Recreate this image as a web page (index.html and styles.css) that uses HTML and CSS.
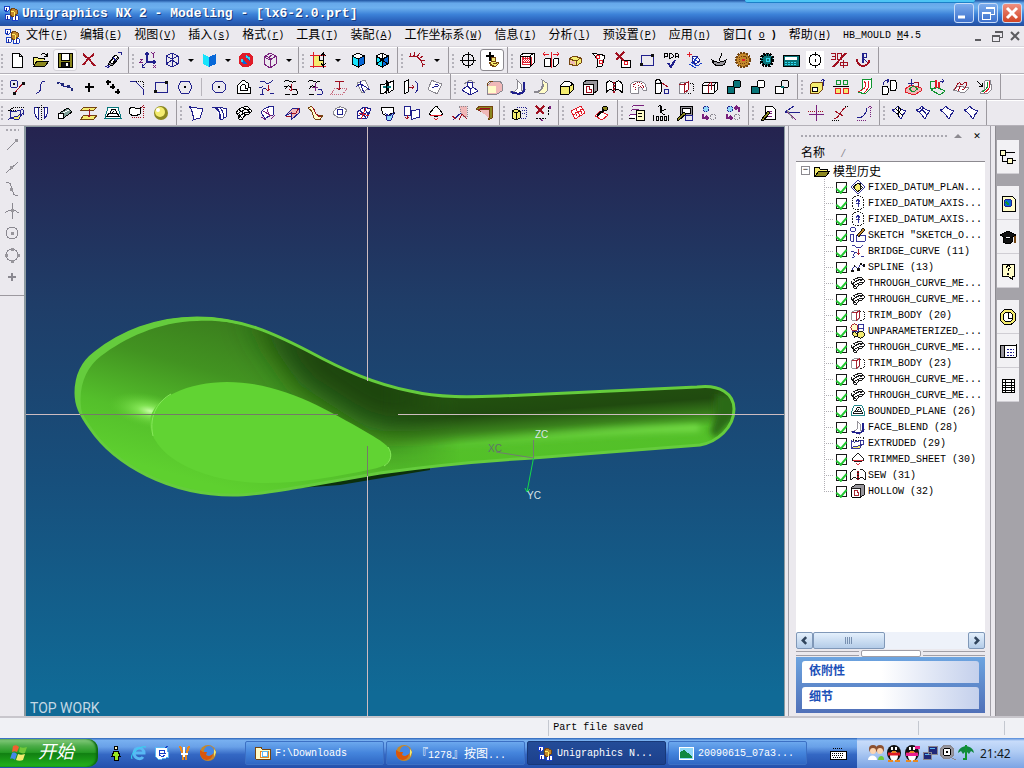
FILE: index.html
```html
<!DOCTYPE html>
<html lang="zh-CN">
<head>
    <meta charset="UTF-8">
    <meta name="viewport" content="width=device-width, initial-scale=1.0">
    <title>Unigraphics NX 2 - Modeling - [lx6-2.0.prt]</title>
    <link rel="stylesheet" href="styles.css">
</head>
<body>
    <!-- ICON SHEET -->
    <svg class="sheet" aria-hidden="true">
        <symbol id="app" viewBox="0 0 18 18"><path class="s-blue f-white" d="M2 2h5v4l-2 2-3-2zM10 12l3-2 3 2v4l-3 1-3-1zM3 11l2-1 3 1v4l-2 1-3-1z"/><path class="s-brown f-orange" d="M8 6l3-2 4 2v4l-4 3-3-2z"/><path class="s-yellow" d="M9 7l3 1v4"/><path class="s-navy" d="M4 4v3M5 12v4M13 12v4"/></symbol>
        <symbol id="new" viewBox="0 0 18 18"><path class="f-white" d="M4 2h7l3 3v11H4zM11 2v3h3"/></symbol>
        <symbol id="open" viewBox="0 0 18 18"><path class="f-yellow" d="M1 14V6h4l1 1h6v2"/><path class="f-olive" d="M2 15l3-5h12l-4 5z"/><path d="M9 4c2-2 5-2 6 1M15 2v3h-3"/></symbol>
        <symbol id="save" viewBox="0 0 18 18"><path class="f-olive" d="M2 2h14v14H2z"/><path class="f-white" d="M5 2h8v7H5z"/><path class="f-black" d="M5 11h8v5H5z"/><path class="f-white plain" d="M10 12h2v3h-2z"/></symbol>
        <symbol id="del" viewBox="0 0 18 18"><path class="s-dred w2" d="M3 3c4 3 8 7 12 12M14 3C10 6 6 10 3 14"/></symbol>
        <symbol id="pen" viewBox="0 0 18 18"><path class="f-gray" d="M4 13l7-9 4 3-7 8z"/><path class="f-white" d="M6 11l6-7 2 2-6 7z"/><path class="s-navy" d="M1 16l4-2M3 17l3-2M14 1h3v3M9 6l3 4"/></symbol>
        <symbol id="csys" viewBox="0 0 18 18"><path class="s-navy w2" d="M8 2v9h8"/><path class="s-navy" d="M8 11l-5 5M6 4l2-3 2 3M14 9l3 2-3 2M3 13v3h3"/><path class="s-purple" d="M12 1l2 2 2-2M14 3v4M1 8h3l-3 3h3M14 14l3 3M17 14l-3 3"/></symbol>
        <symbol id="cube" viewBox="0 0 18 18"><path class="s-navy" d="M3 5l6-3 6 3v8l-6 3-6-3zM3 5l6 3 6-3M9 2v6M9 8v8M3 13l6-4 6 4"/></symbol>
        <symbol id="cyan" viewBox="0 0 18 18"><path class="plain f-cyan" d="M3 3l6 3v10l-6-3z"/><path class="plain f-blue" d="M9 6l7-3v10l-7 3z"/></symbol>
        <symbol id="stop" viewBox="0 0 18 18"><circle class="s-red f-blue w3" cx="9" cy="9" r="6"/><path class="s-cyan w2" d="M9 5l4 3M5 8v3"/><path class="s-red w3" d="M5 5l8 8"/></symbol>
        <symbol id="pcube" viewBox="0 0 18 18"><path class="s-purple" d="M3 6l6-4 6 3v8l-6 4-6-4zM3 6l6 3 6-4M9 9v8M5 5l5 3M12 3L6 8"/></symbol>
        <symbol id="layer" viewBox="0 0 18 18"><path class="f-yellow" d="M4 4h6v5h4v6H4z"/><path class="s-red" d="M1 4h16M1 15h16M4 1v16"/><path d="M14 1v16M12 5l2-3 3 3M12 12l2 3 3-3"/></symbol>
        <symbol id="scube" viewBox="0 0 18 18"><path class="f-cyan" d="M3 5l6 3v8l-6-3z"/><path class="f-blue" d="M9 8l6-3v8l-6 3z"/><path class="f-white" d="M3 5l6-3 6 3-6 3z"/></symbol>
        <symbol id="scube2" viewBox="0 0 18 18"><use href="#scube"/><path d="M3 5l12 8M3 13l12-8M9 2v14"/></symbol>
        <symbol id="comb" viewBox="0 0 18 18"><path class="s-dred" d="M1 6c6-3 13 1 14 10M3 5L2 2M6 5l1-4M9 6l3-4M11 8l4-3M13 10l4-1M14 13l3 1"/></symbol>
        <symbol id="target" viewBox="0 0 18 18"><circle cx="9" cy="9" r="6"/><path d="M9 1v16M1 9h16"/></symbol>
        <symbol id="snap" viewBox="0 0 18 18"><path class="w2" d="M7 1v9M3 5h8"/><path class="s-brown f-yellow" d="M8 6h4v4H8zM6 12l4-2 6 2-4 4z"/><path class="s-brown" d="M7 14l5 2M10 12l4 1"/></symbol>
        <symbol id="redbox" viewBox="0 0 18 18"><path class="f-white" d="M2 5l4-3h10v10l-4 4H2z"/><path class="plain f-red" d="M4 6h10v8H4z"/><path d="M2 5h10v11M12 5l4-3"/><path class="s-white dots" d="M6 6v8M8 6v8M10 6v8M5 9h8M5 12h8"/></symbol>
        <symbol id="stretch" viewBox="0 0 18 18"><path class="s-red" d="M1 3h6M11 3h6M3 1L1 3l2 2M15 1l2 2-2 2M9 1v16"/><path class="f-white" d="M2 9l2-2h4v8H2zM11 9l2-2h3v6l-2 2h-3z"/></symbol>
        <symbol id="brick" viewBox="0 0 18 18"><path class="s-brown f-yellow" d="M3 8l5-3 7 2v5l-5 3-7-2z"/><path class="f-pink plain" d="M4 9l5 2v3l-5-2z"/><path class="s-brown" d="M3 8l7 2 5-3M10 10v5"/></symbol>
        <symbol id="sheet1" viewBox="0 0 18 18"><path class="f-white" d="M2 2c5 2 8 0 13 3l-3 10-5 1c2-6-1-11-5-14z"/><circle class="s-red" cx="8" cy="6" r="2"/><circle class="s-red" cx="11" cy="11" r="2"/></symbol>
        <symbol id="delface" viewBox="0 0 18 18"><path class="f-white" d="M7 9h9v7H7z"/><path class="s-dred w2" d="M2 2l8 8M10 1L2 9"/><circle class="s-red" cx="12" cy="12" r="2"/></symbol>
        <symbol id="rect" viewBox="0 0 18 18"><path class="s-navy" d="M3 4h12v10H3z"/><path class="plain f-black" d="M2 12h3v3H2zM13 3h3v3h-3z"/></symbol>
        <symbol id="pda" viewBox="0 0 18 18"><path d="M2 7V2h3v3H2M7 7V2h2l2 2v2l-2 1H7M13 7V3l1-1 2 1v4M13 5h3"/><path class="s-navy w2" d="M6 12l3 4 4-7"/></symbol>
        <symbol id="bluestar" viewBox="0 0 18 18"><path class="s-red" d="M3 1v5M1 3h5"/><path class="s-navy f-white" d="M6 6l5-1 3 5-4 3-4-3z"/><path class="s-blue" d="M7 7l5 4M11 6l-3 5M5 11l6 4 5-3M3 13l7 4"/></symbol>
        <symbol id="dish" viewBox="0 0 18 18"><path class="f-gray" d="M2 9c3 3 9 3 14 0-1 8-12 8-14 0z"/><path d="M9 10l3-8"/></symbol>
        <symbol id="gear" viewBox="0 0 18 18"><circle class="s-brown f-orange dash w2" cx="9" cy="9" r="7"/><circle class="s-brown dots" cx="9" cy="9" r="4"/><path class="s-red w2" d="M8 9h3"/></symbol>
        <symbol id="tgear" viewBox="0 0 18 18"><circle class="f-teal dash w3" cx="9" cy="9" r="6"/><circle class="s-cyan" cx="10" cy="9" r="2"/></symbol>
        <symbol id="calc" viewBox="0 0 18 18"><path class="f-teal" d="M1 4h16v11H1z"/><path class="f-white plain" d="M3 6h12v3H3z"/><path class="s-cyan dash" d="M3 11h12M3 13h12"/></symbol>
        <symbol id="clk" viewBox="0 0 18 18"><path class="plain f-white" d="M0 0h18v18H0z"/><circle cx="9" cy="9" r="6"/><path d="M9 1v4M9 8v3M9 14v3"/></symbol>
        <symbol id="percent" viewBox="0 0 18 18"><path class="s-dred" d="M1 2h4v6H1M2 5h3M7 2h4v6H7zM10 11h7M10 11v3h7v-3M13 9v8"/><path class="s-dred w2" d="M16 2L3 16"/></symbol>
        <symbol id="anchor" viewBox="0 0 18 18"><path class="s-dred w2" d="M3 8c0 9 12 9 12 1"/><path class="s-navy" d="M8 12V2h4v4H8l5 5M9 12V3"/></symbol>

        <symbol id="circline" viewBox="0 0 18 18"><circle class="s-navy" cx="6" cy="6" r="4"/><path class="s-dred" d="M6 16L15 5"/><path class="plain f-black" d="M5 5h2v2H5zM14 4h3v3h-3zM5 14h3v3H5z"/></symbol>
        <symbol id="scurve" viewBox="0 0 18 18"><path class="s-navy" d="M4 15c8 1 1-12 9-12"/></symbol>
        <symbol id="spline" viewBox="0 0 18 18"><path class="s-navy" d="M1 6c3-2 4-1 6 2s6-2 10 4"/><path class="plain f-navy" d="M5 5h3v3H5zM11 7h3v3h-3zM1 4h2v2H1zM15 10h2v3h-2z"/></symbol>
        <symbol id="plus" viewBox="0 0 18 18"><path class="w2" d="M9 5v9M5 9h9"/></symbol>
        <symbol id="points" viewBox="0 0 18 18"><path class="w2" d="M4 2v5M2 4h5M9 6v5M6 9h5M14 11v5M11 14h5"/></symbol>
        <symbol id="fillet" viewBox="0 0 18 18"><path class="s-navy" d="M2 3h5l8 8v6"/><path class="dots" d="M8 3h7v7"/></symbol>
        <symbol id="hex" viewBox="0 0 18 18"><path class="s-navy" d="M5 3h8l3 6-3 6H5L2 9z"/><path class="w2" d="M8 9h2"/></symbol>
        <symbol id="ellipse" viewBox="0 0 18 18"><ellipse class="s-navy" cx="9" cy="9" rx="7" ry="6"/><path class="w2" d="M8 9h2"/></symbol>
        <symbol id="offset" viewBox="0 0 18 18"><path class="f-white" d="M3 15V8l6-6 5 3v4h2v6zM6 12V9l3-3 2 1v3h2v2z"/></symbol>
        <symbol id="bridge" viewBox="0 0 18 18"><path class="s-navy" d="M2 3h4c2 4 6 3 9-1M2 16h3c-2-4 0-6 3-5M12 15h4M1 9c3 2 3-1 4 0"/><path class="s-dred" d="M10 7v6M8 11l2 2 2-2"/></symbol>
        <symbol id="bridge2" viewBox="0 0 18 18"><path d="M2 4c5-5 5 3 12-1M3 11c3-5 6-3 5-1M3 16h5M10 16h5c1-4-2-6-4-4M2 8h4"/><path class="s-dred" d="M9 6v7M7 11l2 2 2-2"/></symbol>
        <symbol id="bridge3" viewBox="0 0 18 18"><path d="M2 4c5-5 5 3 12-1M3 11c3-5 6-3 5-1M3 16h5"/><path class="s-navy" d="M11 16h5c1-4-2-6-4-4"/><path class="s-purple" d="M9 5v8M6 9h6"/></symbol>
        <symbol id="project" viewBox="0 0 18 18"><path class="s-pink dots" d="M1 16l4-6h12l-4 6z"/><path class="s-dred" d="M9 4v8M7 10l2 2 2-2M5 3h9"/></symbol>
        <symbol id="isect" viewBox="0 0 18 18"><path class="s-gray f-white" d="M3 5l8-3 4 8-7 5z"/><path class="s-navy" d="M2 9c5-6 9 0 14 3M6 3c2 5 1 9 5 12"/></symbol>
        <symbol id="section" viewBox="0 0 18 18"><path class="f-white" d="M2 6h5l2-2v9l-3 2H2zM10 5l5-2v9l-5 3z"/><path class="s-teal w2" d="M5 9h8"/><path d="M8 2v14"/></symbol>
        <symbol id="wrap" viewBox="0 0 18 18"><path class="f-white" d="M2 4l4-2v12l-4 2z"/><path class="s-dred" d="M7 9h5M10 7l2 2-2 2"/><path class="s-navy" d="M13 3c4 3 4 9 0 12"/></symbol>
        <symbol id="sheet2" viewBox="0 0 18 18"><path class="s-gray f-white" d="M6 2c3 3 6 2 10 4l-5 10c-4-3-6-2-9-5z"/><path class="s-navy" d="M6 10c3-3 4 1 7-3M9 6l3 1"/></symbol>
        <symbol id="pyramid" viewBox="0 0 18 18"><path class="s-gray" d="M3 6l6-4 5 3"/><path class="s-navy f-white" d="M1 12l5-4V4l5 0 1 5 5 4-8 4z"/><path class="s-navy" d="M6 8l4 3 2-2M10 11l-1 6"/></symbol>
        <symbol id="cubey" viewBox="0 0 18 18"><path class="s-gray f-pink" d="M2 8l5-5h8l2 3v7l-5 3H2z"/><path class="plain f-cream" d="M3 8h8v7H3z"/><path class="s-brown" d="M2 8c1-5 3-5 6-5"/></symbol>
        <symbol id="blend" viewBox="0 0 18 18"><path class="s-gray f-white" d="M8 2l4 4v7l5-2-6 6-10-3c6 0 9-2 7-12z"/><path class="s-navy w2" d="M15 4v9c-3 4-8 3-13 1"/></symbol>
        <symbol id="blend2" viewBox="0 0 18 18"><path class="s-gray f-cream" d="M9 2l5 3 1 7-4 4-10-2c6 0 9-3 8-12z"/><path class="s-gray" d="M10 6c1 5-3 8-7 8"/></symbol>
        <symbol id="chamfer" viewBox="0 0 18 18"><path class="f-yellow" d="M3 8l5-5h4l4 3v6l-4 4H3z"/><path class="f-white" d="M3 8l5-5h4l4 3-4 3z"/><path d="M12 9v7"/></symbol>
        <symbol id="hollow" viewBox="0 0 18 18"><path class="f-gray" d="M2 5l4-3h10v11l-4 3H2z"/><path class="f-white" d="M2 6h10v10H2z"/><path class="s-dred" d="M5 8v6h5v-3H8V8z"/></symbol>
        <symbol id="sew" viewBox="0 0 18 18"><path class="f-white" d="M1 15V6c2-4 5-4 7-1v8c-2-2-5-2-7 2zM17 15V6c-2-4-5-4-7-1v8c2-2 5-2 7 2z"/><path class="s-dred dash w2" d="M9 4v11"/></symbol>
        <symbol id="arcs" viewBox="0 0 18 18"><path class="s-gray f-white" d="M1 9c1-8 15-8 16 0v3h-3c-1-4-4-4-5-1v4H2z"/><path class="s-dred dots" d="M4 9c1-6 10-6 11 2M6 12c0-5 5-6 7-2"/></symbol>
        <symbol id="cyls" viewBox="0 0 18 18"><path class="f-white" d="M2 4c0-3 6-3 6 0v10c0 2-6 2-6 0zM2 4c0 2 6 2 6 0"/><path class="s-navy" d="M11 11h4v4h-4z"/><path class="s-dred" d="M9 5l6 4"/></symbol>
        <symbol id="trim" viewBox="0 0 18 18"><path class="s-gray f-white" d="M2 6l3-2h6v8l-2 3H2z"/><path class="dots" d="M11 5h5v8l-2 2h-4"/><path class="s-dred" d="M7 6v9l4-3V4zM2 6h7"/></symbol>
        <symbol id="split" viewBox="0 0 18 18"><path class="f-white" d="M1 7l3-3h12v8l-3 3H1zM1 7h12l3-3M13 7v8"/><path class="s-dred" d="M7 7v8M10 4v8M7 7l3-3"/></symbol>
        <symbol id="unite" viewBox="0 0 18 18"><path class="f-teal" d="M2 8h7v7H2z"/><circle class="f-teal" cx="12" cy="6" r="4"/></symbol>
        <symbol id="subtract" viewBox="0 0 18 18"><path class="f-teal" d="M2 8h8v7H2z"/><circle class="f-white" cx="12" cy="6" r="4"/></symbol>
        <symbol id="intersect" viewBox="0 0 18 18"><path class="f-white" d="M2 8h8v7H2z"/><circle cx="12" cy="6" r="4"/><path class="plain f-teal" d="M8 8h3v2H8z"/></symbol>
        <symbol id="mold1" viewBox="0 0 18 18"><path class="s-brown f-yellow" d="M2 7l3-3h9v8l-3 3H2z"/><path class="f-white" d="M4 9h5v4H4z"/><path class="s-navy" d="M15 1v7M13 3l2-2 2 2"/></symbol>
        <symbol id="mold2" viewBox="0 0 18 18"><path class="s-green" d="M4 2h4v4H4zM11 2h4v4h-4z"/><path class="s-red f-yellow" d="M3 10h5v5H3zM11 10h5v5h-5z"/><path d="M1 8h16"/></symbol>
        <symbol id="mold3" viewBox="0 0 18 18"><path class="s-green f-white" d="M6 2l9-1v9l-6 6-7-2 5-3z"/><path class="s-red" d="M8 3c4 5 0 9-6 11M12 3c2 5 0 8-4 12"/></symbol>
        <symbol id="mold4" viewBox="0 0 18 18"><path class="f-white" d="M10 4c0-2 6-2 6 0v7c0 2-6 2-6 0zM2 10c0-2 6-2 6 0v5c0 2-6 2-6 0z"/><path class="s-navy" d="M3 7c0-4 3-5 6-5M7 1l2 1-2 3"/></symbol>
        <symbol id="mold5" viewBox="0 0 18 18"><path class="s-red f-pink" d="M1 11l6-4 10 3v3l-7 4-9-3z"/><path class="s-green" d="M5 11l5-3 4 3-5 3z"/><path class="s-navy" d="M7 1v7M4 5h6"/><path class="s-dred" d="M10 4h4v5"/></symbol>
        <symbol id="mold6" viewBox="0 0 18 18"><path class="s-green" d="M2 3h5v7H2zM3 12l5-3 9 4-5 4z"/><path class="s-red w2" d="M8 2v8M11 4v6"/><path class="s-navy" d="M12 3h4M14 1l2 2-2 2"/></symbol>
        <symbol id="mold7" viewBox="0 0 18 18"><path class="s-gray f-white" d="M1 12l5-4 11 2-5 5z"/><path class="s-dred" d="M2 12c4-3 2-8 6-7 2 4 3 0 6-1 1 4-1 7-4 8M6 13c2-3 1-5 3-5"/></symbol>
        <symbol id="mold8" viewBox="0 0 18 18"><path class="s-gray f-white" d="M9 3l5-1 2 9-5 5-7-1 4-3z"/><path class="s-green" d="M11 4c2 5-1 8-5 10"/><path class="s-red" d="M13 3c2 5 0 9-5 12"/><path d="M1 3l5 5M6 5v3H3"/></symbol>

        <symbol id="extrude" viewBox="0 0 18 18"><path class="dots" d="M2 6l4-3h10l-3 3z"/><path class="s-navy f-yellow" d="M1 15c3-4 7 0 10-4l3-1-3 5c-3 1-7-1-10 0z"/><path class="s-navy" d="M2 7c5 3 8-2 13-1v5M2 6v8M12 7v5"/></symbol>
        <symbol id="revolve" viewBox="0 0 18 18"><path class="s-navy f-white" d="M2 3h4v12C4 14 2 9 2 3zM16 3h-4v12c2-1 4-6 4-12z"/><path class="dots" d="M9 1v16M5 3h8"/></symbol>
        <symbol id="cable" viewBox="0 0 18 18"><path class="f-sage" d="M2 10L12 4l4 4L6 15z"/><circle class="f-white" cx="5" cy="12" r="3"/><path class="s-white" d="M7 9l6-3"/></symbol>
        <symbol id="plates" viewBox="0 0 18 18"><path class="s-brown f-yellow" d="M1 15l3-4h13l-3 4zM1 6l3-3h13l-3 3z"/><path class="s-dred" d="M9 5v8M7 11l2 2 2-2"/></symbol>
        <symbol id="bounded" viewBox="0 0 18 18"><path class="s-teal f-white" d="M4 3h10l3 11H1z"/><path d="M3 12c1-4 11-4 12 0zM6 9l2-4h3l2 4M8 9l2-2"/></symbol>
        <symbol id="ext2" viewBox="0 0 18 18"><path class="f-white" d="M1 5c4-4 7 1 11-1v6c-4 2-8 2-10 0z"/><path class="s-dred dots" d="M15 1v14M13 4l2-2 2 2M4 13h9"/></symbol>
        <symbol id="sphere" viewBox="0 0 18 18"><circle class="plain f-olive" cx="9" cy="9" r="7"/><circle class="plain f-yellow" cx="8" cy="8" r="5"/><circle class="plain f-white" cx="6" cy="6" r="2"/></symbol>
        <symbol id="ruled" viewBox="0 0 18 18"><path class="s-navy f-white" d="M2 2c4 3 9 1 14 3-1 4-2 6-3 9-3 2-5 0-7 2 1-6-1-10-4-14z"/></symbol>
        <symbol id="thru" viewBox="0 0 18 18"><path class="s-navy f-white" d="M1 3c5 1 10 0 15 2l-1 8-5 3c0-8-4-12-9-13zM5 3c4 3 5 8 3 12M9 4c3 3 4 7 3 10"/></symbol>
        <symbol id="mesh" viewBox="0 0 18 18"><path class="f-white" d="M1 9c2-4 7-7 12-6l4 4-3 3c-4 0-6 3-7 6l-3-1c0-3-1-5-3-6z"/><path d="M4 6c4 1 5 4 6 6M8 4c4 1 6 3 7 5M2 11c3-4 7-6 13-6M4 14c2-4 6-6 11-6M3 9l4 5"/></symbol>
        <symbol id="sweep" viewBox="0 0 18 18"><path class="s-navy f-white" d="M2 8c4-5 8-6 13-5l-1 8c-4 0-6 2-8 4z"/><path class="s-purple" d="M2 13l5 3M12 15l4-4M4 7l9 5M8 5l3 8"/></symbol>
        <symbol id="fold" viewBox="0 0 18 18"><path class="s-navy f-pink" d="M2 12l8-8h6v5l-8 7V9z"/><path class="s-dred" d="M8 9h5l3-5M3 12h5"/></symbol>
        <symbol id="ribbon" viewBox="0 0 18 18"><path class="s-brown f-cream" d="M1 4c4-3 6 0 7 4s4 3 8 3l-3 5c-5 0-7-2-7-5s-2-5-5-7z"/><path class="s-dred" d="M5 3c4 3 2 9 9 10"/></symbol>
        <symbol id="swirl" viewBox="0 0 18 18"><path class="s-gray f-white" d="M2 10c2-8 9-9 14-4-2 2-1 4-4 7-4 2-6 0-10-3z"/><circle class="s-navy" cx="9" cy="8" r="3"/></symbol>
        <symbol id="grid" viewBox="0 0 18 18"><path class="s-navy f-white" d="M2 8l7-5 7 2-4 9-9 1z"/><path class="s-navy" d="M5 6l6 8M9 4l5 8M2 12l12-4"/><path class="s-red" d="M4 9l10 3M11 4l-5 11"/></symbol>
        <symbol id="curl" viewBox="0 0 18 18"><path class="f-white" d="M2 4l12-1 1 6c-3 0-5 1-6 4l-5-3z"/><path class="s-navy f-sky" d="M7 10l3 2 5-3-3 7H8z"/></symbol>
        <symbol id="quilt" viewBox="0 0 18 18"><path class="s-navy f-white" d="M1 2h6v9H1zM8 6c4 2 5-1 8-1v8c-3 0-5 3-8 2z"/><path class="s-dred" d="M4 11v4M2 13l2 2 2-2"/></symbol>
        <symbol id="tsheet" viewBox="0 0 18 18"><path class="f-white" d="M2 10l6-7c2-2 2 0 8 7-4 3-10 3-14 0z"/><path class="s-red" d="M3 11h12M7 14l2 2 2-2"/></symbol>
        <symbol id="ext3" viewBox="0 0 18 18"><path class="s-gray f-pink dots" d="M8 2h8v11l-5-1z"/><path class="s-navy" d="M2 15c4 1 4-6 8-5"/><path class="s-dred" d="M8 16l3-6 5 5M1 12l4 3"/></symbol>
        <symbol id="thick" viewBox="0 0 18 18"><path class="s-brown f-olive" d="M1 5l4-3h12v12l-4 2V7H5z"/><path class="s-brown f-pink" d="M3 5h11v9"/><path class="s-dred" d="M4 7l2-3h9"/></symbol>
        <symbol id="move" viewBox="0 0 18 18"><path class="f-yellow" d="M2 7l4-2 4 2v7l-4 2-4-2z"/><path d="M2 7l4 2 4-2M6 9v7"/><path class="s-navy dots" d="M7 3h9v11h-5M12 6h4M12 9h4"/></symbol>
        <symbol id="delpar" viewBox="0 0 18 18"><path class="s-dred w2" d="M2 2l8 8M10 2L2 10"/><path class="dash" d="M2 14h10M14 3v9"/><path class="s-purple" d="M15 2l2 3M17 2l-2 3M6 15l3 2"/></symbol>
        <symbol id="redgrid" viewBox="0 0 18 18"><path class="s-red f-white" d="M2 7l10-5 4 7-10 6z"/><path class="s-red" d="M4 11l10-6M7 5l4 7M11 5l2 5M6 8l2 4"/></symbol>
        <symbol id="fix" viewBox="0 0 18 18"><path class="s-red f-white" d="M2 12l5-5 8 4-6 5z"/><path class="f-olive" d="M5 10l6-4 2 1 2-2c-1-3-4-4-6-1l1 2-6 5z"/><path class="w2" d="M4 12l7-6"/></symbol>
        <symbol id="list" viewBox="0 0 18 18"><path class="s-purple f-white" d="M1 12l2-2h6v6M3 7l2-2h6M4 3l2-2h10"/><path class="f-cream" d="M8 6h8v10H8z"/><path d="M10 9h4M10 12h4M1 14h6"/></symbol>
        <symbol id="zero" viewBox="0 0 18 18"><path d="M8 8V1M9 8V2M8 8l6-3M8 8l5 3M6 3l2-2"/><path d="M2 11l-1 3 1 3M4 12h2v4H4zM8 12h2v4H8zM12 12h2v4h-2zM16 11l1 3-1 3"/></symbol>
        <symbol id="disk" viewBox="0 0 18 18"><path class="f-gray" d="M4 2h12v9H4z"/><path class="f-white" d="M6 4h8v5H6z"/><path class="s-navy" d="M9 11h7v5H9z"/><path class="f-olive" d="M1 15l1 2 8-7-2-2z"/></symbol>
        <symbol id="cyc" viewBox="0 0 18 18"><circle class="s-navy f-sky dash" cx="6" cy="5" r="3"/><circle class="s-gray dash" cx="13" cy="13" r="3"/><path class="s-purple w2" d="M3 10v4h5M6 12l2 2-2 2"/></symbol>
        <symbol id="cyc2" viewBox="0 0 18 18"><use href="#cyc"/><path class="s-purple w2" d="M15 8V4h-4M13 2l-2 2 2 2"/></symbol>
        <symbol id="docpen" viewBox="0 0 18 18"><path class="f-white" d="M6 2h7l3 3v10H6z"/><path class="s-purple" d="M9 7h4M9 9h4M9 12h4"/><path class="f-olive" d="M2 16l2 1 7-8-2-2z"/></symbol>
        <symbol id="ray" viewBox="0 0 18 18"><path class="s-navy" d="M2 8h15M2 8l9-6"/><path class="s-purple" d="M4 8l9 8"/><path class="s-gray" d="M4 6l6 9"/></symbol>
        <symbol id="cross" viewBox="0 0 18 18"><path class="s-dred dots" d="M1 7h16"/><path class="s-purple" d="M9 1v16M2 10h15"/></symbol>
        <symbol id="rcurve" viewBox="0 0 18 18"><path class="s-dred" d="M3 15c6-1 5-8 12-12M4 7l8 5"/><path class="dots" d="M1 16h8M14 2h3"/></symbol>
        <symbol id="arc" viewBox="0 0 18 18"><path class="s-navy" d="M2 14c6 0 9-3 10-10"/><path class="s-purple dots" d="M15 2v12M2 16h9M13 4l2-2 2 2"/></symbol>
        <symbol id="surf" viewBox="0 0 18 18"><path class="s-navy f-white" d="M2 6c3 0 4-2 6-4 2 4 5 4 8 5-2 2-4 4-5 8-3-4-5-7-9-9z"/></symbol>
        <symbol id="surf1" viewBox="0 0 18 18"><use href="#surf"/><path d="M11 4c0 3-2 5-5 6M5 4l8 8M8 2v11"/></symbol>
        <symbol id="surf2" viewBox="0 0 18 18"><use href="#surf"/><path class="s-navy" d="M5 4c4 2 7 4 8 8M9 3c-1 3-3 5-5 5"/></symbol>

        <symbol id="datum" viewBox="0 0 18 18"><path class="s-navy" d="M1 9l8-8 8 8-8 8z"/><path class="f-yellow" d="M6 6l6-1v7l-4 2-3-4z"/><path d="M3 9l6-4 5 5-5 4z"/></symbol>
        <symbol id="axis" viewBox="0 0 18 18"><path class="dash" d="M3 4c0-4 12-4 12 0v10c0 3-12 3-12 0z"/><path class="s-navy" d="M9 4v10M6 7l3-3 3 3M7 8l2-3 2 3M7 10h4"/></symbol>
        <symbol id="sketch" viewBox="0 0 18 18"><path class="s-navy" d="M1 1h5v4H1zM1 8h3v8H1zM7 9h10v7H7z"/><path class="f-orange" d="M8 9l7-8 2 2-7 8z"/></symbol>
        <symbol id="zig" viewBox="0 0 18 18"><path class="s-navy" d="M2 13l3-5 4 3 3-5 4 2"/><path class="plain f-black" d="M1 12h3v3H1zM4 7h2v2H4zM8 10h3v3H8zM11 5h2v2h-2zM15 6h2v3h-2z"/></symbol>
        <symbol id="unparam" viewBox="0 0 18 18"><circle class="s-dred f-cream" cx="5" cy="5" r="4"/><path class="s-navy" d="M9 2h7M9 6h7M10 1v8M15 1v8M2 9h8"/><path class="f-yellow" d="M8 11l4-2 4 2v4l-4 2-4-2zM2 11l3-1 3 2v3l-3 1z"/></symbol>
        <symbol id="folder" viewBox="0 0 18 18"><path class="f-yellow" d="M1 14V5h5l1 2h7v3"/><path class="f-olive" d="M2 14l4-5h11l-4 5z"/></symbol>
        <symbol id="treeview" viewBox="0 0 18 18"><path class="f-cream" d="M1 2h5v5H1zM8 10h5v5H8z"/><path d="M6 4h10M3 7v6h5M13 12h4"/></symbol>
        <symbol id="webdoc" viewBox="0 0 18 18"><path class="f-cream" d="M3 2h10l3 3v12H3z"/><circle class="s-navy f-blue" cx="9" cy="9" r="4"/><path class="s-green w2" d="M7 8l3 3"/></symbol>
        <symbol id="hat" viewBox="0 0 18 18"><path class="f-black" d="M1 7l8-4 8 4-8 4zM4 9v5c3 2 7 2 9 0V9"/><path class="s-brown w2" d="M16 8v7"/></symbol>
        <symbol id="help" viewBox="0 0 18 18"><path class="f-cream" d="M3 2h12v12h-2v3l-4-3H3z"/><path d="M7 6c0-3 5-3 4 0-2 1-2 1-2 3"/><path class="plain f-black" d="M8 11h2v2H8z"/></symbol>
        <symbol id="history" viewBox="0 0 18 18"><circle class="f-yellow" cx="9" cy="9" r="8"/><circle class="f-white" cx="9" cy="9" r="5"/><path d="M9 5v5h4"/></symbol>
        <symbol id="book" viewBox="0 0 18 18"><path class="f-gray" d="M1 3h4v12H1z"/><path class="f-white" d="M5 4l12-1v12l-12 1z"/><path class="s-navy dash" d="M8 7h7M8 10h7M8 13h7"/></symbol>
        <symbol id="sheetlist" viewBox="0 0 18 18"><path class="f-white" d="M3 3h12v13H3zM3 6h12M3 9h12M3 11h12M3 14h12M6 3v13M12 3v13"/></symbol>

        <symbol id="pt-end" viewBox="0 0 18 18"><path class="s-gray" d="M4 14l9-9"/><path class="plain f-gray" d="M12 3h3v3h-3z"/></symbol>
        <symbol id="pt-mid" viewBox="0 0 18 18"><path class="s-gray" d="M3 15L15 4"/><path class="plain f-gray" d="M7 8h3v3H7z"/></symbol>
        <symbol id="pt-ctl" viewBox="0 0 18 18"><path class="s-gray" d="M3 2c5 0 5 4 6 7s1 7 6 7"/><path class="plain f-gray" d="M7 8h3v3H7z"/></symbol>
        <symbol id="pt-int" viewBox="0 0 18 18"><path class="s-gray" d="M9 1v16M2 11c4-4 9-4 14 0"/><path class="plain f-gray" d="M8 7h3v3H8z"/></symbol>
        <symbol id="pt-cen" viewBox="0 0 18 18"><circle class="s-gray" cx="9" cy="9" r="6"/><path class="plain f-gray" d="M8 8h3v3H8z"/></symbol>
        <symbol id="pt-quad" viewBox="0 0 18 18"><circle class="s-gray" cx="9" cy="9" r="6"/><path class="plain f-gray" d="M8 2h3v3H8zM8 14h3v3H8zM2 8h3v3H2zM14 8h3v3h-3z"/></symbol>
        <symbol id="pt-plus" viewBox="0 0 18 18"><path class="s-gray w2" d="M9 5v8M5 9h8"/></symbol>

        <symbol id="flag" viewBox="0 0 18 18"><path class="plain f-flagred" d="M3 2c2-1 4-1 6 1L7 8C5 7 4 7 2 8z"/><path class="plain f-flaggreen" d="M10 3c2 1 4 1 7 0l-2 6c-2 1-4 0-6-1z"/><path class="plain f-flagblue" d="M2 9c2-1 4 0 5 1l-2 6c-1-1-3-2-5-1z"/><path class="plain f-yellow" d="M8 10c2 1 4 1 7 0l-2 6c-2 1-5 1-7 0z"/></symbol>
        <symbol id="man" viewBox="0 0 18 18"><circle class="f-cream" cx="9" cy="4" r="2"/><path class="f-lime" d="M7 7h4l2 5h-2v4H7v-4H5z"/></symbol>
        <symbol id="ie" viewBox="0 0 18 18"><path class="s-sky w3" d="M4 9h10c0-6-9-7-10 0 0 6 7 7 9 4"/><path class="s-cyan" d="M2 15C-1 10 10 1 16 3"/></symbol>
        <symbol id="mail" viewBox="0 0 18 18"><path class="s-sky f-white" d="M3 3h11l2 10-10 3-4-4z"/><path class="s-blue" d="M6 9h6c0-4-6-4-6 0 0 4 4 4 6 2M12 4l3-2"/></symbol>
        <symbol id="fork" viewBox="0 0 18 18"><path class="s-orange w2" d="M4 2l3 9v5M13 2l-3 9v5"/><path class="s-white w2" d="M8 3v10M5 10h7"/></symbol>
        <symbol id="fox" viewBox="0 0 18 18"><circle class="plain f-orange" cx="9" cy="9" r="8"/><circle class="plain f-flagblue" cx="10" cy="7" r="5"/><path class="plain f-fox" d="M1 6l3 2h4l-1 3c2 2 4 1 7-1-1 8-12 8-13-1z"/><path class="plain f-yellow" d="M15 5l2 3-2 5z"/></symbol>
        <symbol id="dir" viewBox="0 0 18 18"><path class="s-brown f-cream" d="M1 3h6l1 2h8v10H2z"/><path class="s-orange f-white" d="M6 7h8v6H6z"/><circle class="s-sky" cx="11" cy="10" r="3"/></symbol>
        <symbol id="pic" viewBox="0 0 18 18"><path class="s-white f-sky" d="M2 3h14v12H2z"/><path class="plain f-green" d="M3 14V8l4-2 8 6v2z"/></symbol>
        <symbol id="kbd" viewBox="0 0 18 18"><path class="f-white" d="M1 7h16v8H1z"/><path class="dots" d="M3 9h12M3 11h12M4 13h10M4 4h9"/></symbol>
        <symbol id="people" viewBox="0 0 18 18"><circle class="plain f-brown" cx="6" cy="5" r="4"/><circle class="plain f-brown" cx="13" cy="5" r="4"/><circle class="plain f-skin" cx="6" cy="7" r="3"/><circle class="plain f-skin" cx="13" cy="7" r="3"/><path class="plain f-white" d="M1 16c0-6 9-6 9 0z"/><path class="plain f-flaggreen" d="M11 16c0-5 6-5 6-1v1z"/></symbol>
        <symbol id="qq" viewBox="0 0 18 18"><ellipse class="plain f-black" cx="9" cy="9" rx="7" ry="8"/><ellipse class="plain f-white" cx="9" cy="12" rx="4" ry="5"/><path class="plain f-white" d="M6 3h2v3H6zM10 3h2v3h-2z"/><path class="s-red w3" d="M3 10h12"/><path class="s-orange w2" d="M7 8h4M3 17h5M10 17h5"/></symbol>
        <symbol id="qq2" viewBox="0 0 18 18"><use href="#qq"/><path class="s-magenta w3" d="M3 10h12M12 3h5"/></symbol>
        <symbol id="net" viewBox="0 0 18 18"><path class="s-gray f-navy" d="M7 2h9v8H7zM2 8h8v7H2z"/><path class="s-sky" d="M9 4h5M4 10h4"/></symbol>
        <symbol id="sound" viewBox="0 0 18 18"><circle class="f-gray s-gray" cx="8" cy="8" r="7"/><circle class="f-white" cx="8" cy="8" r="4"/><circle class="f-black" cx="8" cy="8" r="1"/><path class="s-gray" d="M13 14l4 2"/></symbol>
        <symbol id="umbrella" viewBox="0 0 18 18"><path class="plain f-green" d="M1 9c1-9 15-9 16 0l-3-2-2 3-3-3-3 3-2-3z"/><path class="s-green w2" d="M9 1v14h-3"/></symbol>
    </svg>

    <!-- TITLE BAR -->
    <header class="titlebar">
        <svg class="icon" aria-hidden="true"><use href="#app"/></svg>
        <h1>Unigraphics NX 2 - Modeling - [lx6-2.0.prt]</h1>
        <span class="dock"></span>
        <button class="win" aria-label="Minimize"><svg viewBox="0 0 18 18"><path d="M3 13h7"/></svg></button>
        <button class="win" aria-label="Restore"><svg viewBox="0 0 18 18"><path class="thin" d="M7 3h8v7h-3M7 4h8M7 5V3M3 8h8v7H3zM3 9h8"/></svg></button>
        <button class="win close" aria-label="Close"><svg viewBox="0 0 18 18"><path d="M4 4l10 10M14 4L4 14"/></svg></button>
    </header>

    <!-- MENU BAR -->
    <nav class="menubar">
        <svg class="icon" aria-hidden="true"><use href="#app"/></svg>
        <button>文件<span>(<u>F</u>)</span></button>
        <button>编辑<span>(<u>E</u>)</span></button>
        <button>视图<span>(<u>V</u>)</span></button>
        <button>插入<span>(<u>s</u>)</span></button>
        <button>格式<span>(<u>r</u>)</span></button>
        <button>工具<span>(<u>T</u>)</span></button>
        <button>装配<span>(<u>A</u>)</span></button>
        <button>工作坐标系<span>(<u>W</u>)</span></button>
        <button>信息<span>(<u>I</u>)</span></button>
        <button>分析<span>(<u>l</u>)</span></button>
        <button>预设置<span>(<u>P</u>)</span></button>
        <button>应用<span>(<u>n</u>)</span></button>
        <button>窗口<span><b>(</b> <u>o</u> <b>)</b></span></button>
        <button>帮助<span>(<u>H</u>)</span></button>
        <button><span>HB_MOULD <u>M</u>4.5</span></button>
        <div class="mdi">
            <button aria-label="Minimize document"><svg viewBox="0 0 18 18"><path d="M5 13h6"/></svg></button>
            <button aria-label="Restore document"><svg viewBox="0 0 18 18"><path class="thin" d="M7 4h7v6h-3M7 5h7M4 8h7v6H4zM4 9h7"/></svg></button>
            <button aria-label="Close document"><svg viewBox="0 0 18 18"><path d="M5 5l8 8M13 5l-8 8"/></svg></button>
        </div>
    </nav>

    <!-- TOOLBARS -->
    <div class="toolrow">
        <div class="toolbar">
            <button aria-label="New"><svg><use href="#new"/></svg></button>
            <button aria-label="Open"><svg><use href="#open"/></svg></button>
            <button class="hot" aria-label="Save"><svg><use href="#save"/></svg></button>
            <button aria-label="Delete"><svg><use href="#del"/></svg></button>
            <button aria-label="Edit display"><svg><use href="#pen"/></svg></button>
        </div>
        <div class="toolbar">
            <button aria-label="View orientation"><svg><use href="#csys"/></svg></button>
            <button aria-label="Wireframe"><svg><use href="#cube"/></svg></button>
            <button class="drop" aria-label="Wireframe options"></button>
            <button aria-label="Face display"><svg><use href="#cyan"/></svg></button>
            <button class="drop" aria-label="Face display options"></button>
            <button aria-label="Stop"><svg><use href="#stop"/></svg></button>
            <button aria-label="Hidden edges"><svg><use href="#pcube"/></svg></button>
            <button class="drop" aria-label="Hidden edge options"></button>
        </div>
        <div class="toolbar">
            <button aria-label="Layout"><svg><use href="#layer"/></svg></button>
            <button class="drop wide" aria-label="Layout options"></button>
            <button aria-label="Shaded"><svg><use href="#scube"/></svg></button>
            <button aria-label="Partially shaded"><svg><use href="#scube2"/></svg></button>
        </div>
        <div class="toolbar">
            <button aria-label="Curvature comb"><svg><use href="#comb"/></svg></button>
            <button class="drop wide" aria-label="Comb options"></button>
        </div>
        <div class="toolbar">
            <button aria-label="Crosshair"><svg><use href="#target"/></svg></button>
            <button class="on" aria-label="Snap"><svg><use href="#snap"/></svg></button>
        </div>
        <div class="toolbar">
            <button aria-label="Solid face"><svg><use href="#redbox"/></svg></button>
            <button aria-label="Resize"><svg><use href="#stretch"/></svg></button>
            <button aria-label="Block"><svg><use href="#brick"/></svg></button>
            <button aria-label="Move region"><svg><use href="#sheet1"/></svg></button>
            <button aria-label="Delete face"><svg><use href="#delface"/></svg></button>
            <button aria-label="Constrain face"><svg><use href="#rect"/></svg></button>
            <button aria-label="PDA check"><svg><use href="#pda"/></svg></button>
            <button aria-label="Add part"><svg><use href="#bluestar"/></svg></button>
            <button aria-label="Dish"><svg><use href="#dish"/></svg></button>
            <button aria-label="Gear"><svg><use href="#gear"/></svg></button>
            <button aria-label="Wheel"><svg><use href="#tgear"/></svg></button>
            <button aria-label="Calculator"><svg><use href="#calc"/></svg></button>
            <button aria-label="Clock"><svg><use href="#clk"/></svg></button>
            <button aria-label="Shrinkage"><svg><use href="#percent"/></svg></button>
            <button aria-label="Anchor"><svg><use href="#anchor"/></svg></button>
        </div>
    </div>
    <div class="toolrow">
        <div class="toolbar">
            <button aria-label="Basic curves"><svg><use href="#circline"/></svg></button>
            <button aria-label="Curve"><svg><use href="#scurve"/></svg></button>
            <button aria-label="Spline"><svg><use href="#spline"/></svg></button>
            <button aria-label="Point"><svg><use href="#plus"/></svg></button>
            <button aria-label="Point set"><svg><use href="#points"/></svg></button>
            <button aria-label="Curve chamfer"><svg><use href="#fillet"/></svg></button>
            <button aria-label="Rectangle"><svg><use href="#rect"/></svg></button>
            <button aria-label="Polygon"><svg><use href="#hex"/></svg></button>
            <span class="divider"></span>
            <button aria-label="Ellipse"><svg><use href="#ellipse"/></svg></button>
            <button aria-label="Offset curve"><svg><use href="#offset"/></svg></button>
            <button aria-label="Bridge curve"><svg><use href="#bridge"/></svg></button>
            <button aria-label="Simplify curve"><svg><use href="#bridge2"/></svg></button>
            <button aria-label="Join curve"><svg><use href="#bridge3"/></svg></button>
            <button aria-label="Project curve"><svg><use href="#project"/></svg></button>
            <button aria-label="Intersection curve"><svg><use href="#isect"/></svg></button>
            <button aria-label="Section curve"><svg><use href="#section"/></svg></button>
            <button aria-label="Wrap curve"><svg><use href="#wrap"/></svg></button>
            <button aria-label="Extract curve"><svg><use href="#sheet2"/></svg></button>
        </div>
        <div class="toolbar">
            <button aria-label="Taper"><svg><use href="#pyramid"/></svg></button>
            <button aria-label="Edge blend"><svg><use href="#cubey"/></svg></button>
            <button aria-label="Face blend"><svg><use href="#blend"/></svg></button>
            <button aria-label="Soft blend"><svg><use href="#blend2"/></svg></button>
            <button aria-label="Chamfer"><svg><use href="#chamfer"/></svg></button>
            <button aria-label="Hollow"><svg><use href="#hollow"/></svg></button>
            <button aria-label="Sew"><svg><use href="#sew"/></svg></button>
            <button aria-label="Patch"><svg><use href="#arcs"/></svg></button>
            <button aria-label="Instance"><svg><use href="#cyls"/></svg></button>
            <button aria-label="Trim body"><svg><use href="#trim"/></svg></button>
            <button aria-label="Split body"><svg><use href="#split"/></svg></button>
            <button aria-label="Unite"><svg><use href="#unite"/></svg></button>
            <button aria-label="Subtract"><svg><use href="#subtract"/></svg></button>
            <button aria-label="Intersect"><svg><use href="#intersect"/></svg></button>
        </div>
        <div class="toolbar">
            <button aria-label="Mold block"><svg><use href="#mold1"/></svg></button>
            <button aria-label="Mold layout"><svg><use href="#mold2"/></svg></button>
            <button aria-label="Parting"><svg><use href="#mold3"/></svg></button>
            <button aria-label="Insert"><svg><use href="#mold4"/></svg></button>
            <button aria-label="Cavity"><svg><use href="#mold5"/></svg></button>
            <button aria-label="Core"><svg><use href="#mold6"/></svg></button>
            <button aria-label="Patch surface"><svg><use href="#mold7"/></svg></button>
            <button aria-label="Extract region"><svg><use href="#mold8"/></svg></button>
        </div>
    </div>
    <div class="toolrow">
        <div class="toolbar">
            <button aria-label="Extruded body"><svg><use href="#extrude"/></svg></button>
            <button aria-label="Revolved body"><svg><use href="#revolve"/></svg></button>
            <button aria-label="Cable"><svg><use href="#cable"/></svg></button>
            <button aria-label="Offset sheet"><svg><use href="#plates"/></svg></button>
            <button aria-label="Bounded plane"><svg><use href="#bounded"/></svg></button>
            <button aria-label="Thicken sheet"><svg><use href="#ext2"/></svg></button>
            <button aria-label="Sphere"><svg><use href="#sphere"/></svg></button>
        </div>
        <div class="toolbar">
            <button aria-label="Ruled"><svg><use href="#ruled"/></svg></button>
            <button aria-label="Through curves"><svg><use href="#thru"/></svg></button>
            <button aria-label="Through curve mesh"><svg><use href="#mesh"/></svg></button>
            <button aria-label="Swept"><svg><use href="#sweep"/></svg></button>
            <button aria-label="Section body"><svg><use href="#fold"/></svg></button>
            <button aria-label="Extension"><svg><use href="#ribbon"/></svg></button>
            <button aria-label="N-sided surface"><svg><use href="#swirl"/></svg></button>
            <button aria-label="From poles"><svg><use href="#grid"/></svg></button>
            <button aria-label="Enlarge"><svg><use href="#curl"/></svg></button>
            <button aria-label="Quilt"><svg><use href="#quilt"/></svg></button>
            <button aria-label="Trimmed sheet"><svg><use href="#tsheet"/></svg></button>
            <button aria-label="Trim and extend"><svg><use href="#ext3"/></svg></button>
            <button aria-label="Offset face"><svg><use href="#thick"/></svg></button>
        </div>
        <div class="toolbar">
            <button aria-label="Transform"><svg><use href="#move"/></svg></button>
            <button aria-label="Remove parameters"><svg><use href="#delpar"/></svg></button>
        </div>
        <div class="toolbar">
            <button aria-label="Face analysis"><svg><use href="#redgrid"/></svg></button>
            <button aria-label="Repair"><svg><use href="#fix"/></svg></button>
        </div>
        <div class="toolbar">
            <button aria-label="Layer settings"><svg><use href="#list"/></svg></button>
            <button aria-label="Origin"><svg><use href="#zero"/></svg></button>
            <button aria-label="Object display"><svg><use href="#disk"/></svg></button>
            <button aria-label="Blank"><svg><use href="#cyc"/></svg></button>
            <button aria-label="Reverse blank"><svg><use href="#cyc2"/></svg></button>
        </div>
        <div class="toolbar">
            <button aria-label="Edit curve parameters"><svg><use href="#docpen"/></svg></button>
            <button aria-label="Trim curve"><svg><use href="#ray"/></svg></button>
            <button aria-label="Divide curve"><svg><use href="#cross"/></svg></button>
            <button aria-label="Stretch curve"><svg><use href="#rcurve"/></svg></button>
            <button aria-label="Arc length"><svg><use href="#arc"/></svg></button>
        </div>
        <div class="toolbar">
            <button aria-label="Isoparametric trim"><svg><use href="#surf1"/></svg></button>
            <button aria-label="Change degree"><svg><use href="#surf2"/></svg></button>
            <button aria-label="Change edge"><svg><use href="#surf"/></svg></button>
            <button aria-label="Reverse normal"><svg><use href="#surf"/></svg></button>
        </div>
    </div>

    <!-- WORK AREA -->
    <main>
        <div class="snapbar">
            <button aria-label="End point"><svg><use href="#pt-end"/></svg></button>
            <button aria-label="Mid point"><svg><use href="#pt-mid"/></svg></button>
            <button aria-label="Control point"><svg><use href="#pt-ctl"/></svg></button>
            <button aria-label="Intersection"><svg><use href="#pt-int"/></svg></button>
            <button aria-label="Arc center"><svg><use href="#pt-cen"/></svg></button>
            <button aria-label="Quadrant"><svg><use href="#pt-quad"/></svg></button>
            <button aria-label="Existing point"><svg><use href="#pt-plus"/></svg></button>
        </div>

        <div class="viewport">
            <svg class="model" viewBox="26 127 758 589" role="img" aria-label="Spoon model">
                <defs>
                    <linearGradient id="bowl" gradientUnits="userSpaceOnUse" x1="240" y1="318" x2="195" y2="480">
                        <stop offset="0" stop-color="#3a7c1d"/>
                        <stop offset=".35" stop-color="#429321"/>
                        <stop offset=".7" stop-color="#54bf2b"/>
                        <stop offset="1" stop-color="#5ed02f"/>
                    </linearGradient>
                    <linearGradient id="handle" gradientUnits="userSpaceOnUse" x1="560" y1="392" x2="565" y2="460">
                        <stop offset="0" stop-color="#22500f"/>
                        <stop offset=".25" stop-color="#204a0f"/>
                        <stop offset=".48" stop-color="#397f1c"/>
                        <stop offset=".66" stop-color="#55c02b"/>
                        <stop offset="1" stop-color="#52c127"/>
                    </linearGradient>
                    <radialGradient id="glow" gradientUnits="userSpaceOnUse" cx="0" cy="0" r="1" gradientTransform="translate(150 411) rotate(12) scale(42 17)">
                        <stop offset="0" stop-color="#c8ffa8"/>
                        <stop offset=".3" stop-color="#8bec5c" stop-opacity=".8"/>
                        <stop offset="1" stop-color="#5ecb30" stop-opacity="0"/>
                    </radialGradient>
                    <linearGradient id="fade" x1="0" x2="1">
                        <stop offset="0" stop-color="#fff" stop-opacity="0"/>
                        <stop offset="1" stop-color="#fff"/>
                    </linearGradient>
                    <linearGradient id="streak" gradientUnits="userSpaceOnUse" x1="430" y1="0" x2="700" y2="0">
                        <stop offset="0" stop-color="#7be04d" stop-opacity="0"/>
                        <stop offset="1" stop-color="#7be04d"/>
                    </linearGradient>
                    <mask id="join"><path fill="url(#fade)" d="M380 370h80v120h-80z"/><path fill="#fff" d="M459 370h300v120H459z"/></mask>
                    <filter id="soft" x="-30%" y="-30%" width="160%" height="160%"><feGaussianBlur stdDeviation="16"/></filter>
                    <filter id="soft2" x="-20%" y="-200%" width="140%" height="500%"><feGaussianBlur stdDeviation="3"/></filter>
                    <path id="rim" d="M76 393C76 374 83 362 95 353C120 333 155 318 197 318C242 318 275 334 308 351C345 371 375 384 410 391C440 398 470 397 500 396L697 387C720 384 734 394 734 409C734 428 717 442 700 445L533 458C480 461 430 466 380 473L300 487C275 491 255 495 233 495C170 495 115 465 90 428C80 414 76 405 76 393Z"/>
                    <clipPath id="inside"><use href="#rim"/></clipPath>
                </defs>
                <path fill="#0c300c" d="M270 490L430 464V470L340 485Z"/>
                <g clip-path="url(#inside)">
                    <path fill="url(#bowl)" d="M70 310h670v190H70z"/>
                    <path fill="#1d450d" filter="url(#soft)" d="M250 312L340 335L450 385L480 425L405 432L370 430L300 385Z"/>
                    <path fill="url(#handle)" mask="url(#join)" d="M380 370h380v120H380z"/>
                    <path fill="none" stroke="url(#streak)" stroke-width="6" stroke-linecap="round" filter="url(#soft2)" d="M430 446C560 434 640 429 697 428"/>
                    <path fill="url(#glow)" d="M90 385h110v50H90z"/>
                    <path fill="#2c6a14" filter="url(#soft2)" d="M716 394l22 0v20l-22 24-6-6 5-15z"/>
                </g>
                <path fill="#61d333" d="M150 422C151 397 190 382 227 382C282 382 330 411 373 436C388 445 391 449 391 455C391 464 382 467 373 469C335 477 300 483 267 483C200 483 150 455 150 422Z"/>
                <path fill="none" stroke="#86e85a" d="M153 436C148 414 160 400 171 394M388 447C393 454 391 462 384 466"/>
                <use href="#rim" fill="none" stroke="#65cc3d" stroke-width="3"/>
                <path fill="#65cc3d" d="M83 418C70 390 78 364 95 352C120 333 155 317 197 317C225 317 245 323 262 330C240 323 220 320 197 321C158 322 125 338 101 356C85 368 76 390 83 418Z"/>
                <g class="cursor">
                    <path d="M367.500 127V381M26 414.500H80M398 414.500H784M367.500 476V716"/>
                    <path class="over" d="M80 414.500H338M367.500 446V476"/>
                </g>
                <path fill="none" stroke="#717d70" d="M533.500 458L496 452M533.500 458V440"/>
                <path fill="none" stroke="#16d84a" d="M533.500 458L527 492M525 488l2 4 3-3"/>
                <text class="axis dim" x="488" y="452">XC</text>
                <text class="axis" x="535" y="438">ZC</text>
                <text class="axis" x="527" y="499">YC</text>
            </svg>
            <p class="viewname">TOP WORK</p>
        </div>

        <aside class="navigator">
            <div class="caption">
                <span class="grip"></span>
                <button class="pin" aria-label="Pin"></button>
                <button class="shut" aria-label="Close navigator">✕</button>
            </div>
            <div class="colhead">名称 <span class="sort">/</span></div>
            <div class="tree">
                <div class="root">
                    <button class="fold" aria-label="Collapse">−</button>
                    <svg class="icon" aria-hidden="true"><use href="#folder"/></svg>
                    模型历史
                </div>
                <ul>
                    <li><label><input type="checkbox" checked><svg><use href="#datum"/></svg>FIXED_DATUM_PLAN...</label></li>
                    <li><label><input type="checkbox" checked><svg><use href="#axis"/></svg>FIXED_DATUM_AXIS...</label></li>
                    <li><label><input type="checkbox" checked><svg><use href="#axis"/></svg>FIXED_DATUM_AXIS...</label></li>
                    <li><label><input type="checkbox" checked><svg><use href="#sketch"/></svg>SKETCH "SKETCH_O...</label></li>
                    <li><label><input type="checkbox" checked><svg><use href="#bridge"/></svg>BRIDGE_CURVE (11)</label></li>
                    <li><label><input type="checkbox" checked><svg><use href="#zig"/></svg>SPLINE (13)</label></li>
                    <li><label><input type="checkbox" checked><svg><use href="#mesh"/></svg>THROUGH_CURVE_ME...</label></li>
                    <li><label><input type="checkbox" checked><svg><use href="#mesh"/></svg>THROUGH_CURVE_ME...</label></li>
                    <li><label><input type="checkbox" checked><svg><use href="#trim"/></svg>TRIM_BODY (20)</label></li>
                    <li><label><input type="checkbox" checked><svg><use href="#unparam"/></svg>UNPARAMETERIZED_...</label></li>
                    <li><label><input type="checkbox" checked><svg><use href="#mesh"/></svg>THROUGH_CURVE_ME...</label></li>
                    <li><label><input type="checkbox" checked><svg><use href="#trim"/></svg>TRIM_BODY (23)</label></li>
                    <li><label><input type="checkbox" checked><svg><use href="#mesh"/></svg>THROUGH_CURVE_ME...</label></li>
                    <li><label><input type="checkbox" checked><svg><use href="#mesh"/></svg>THROUGH_CURVE_ME...</label></li>
                    <li><label><input type="checkbox" checked><svg><use href="#bounded"/></svg>BOUNDED_PLANE (26)</label></li>
                    <li><label><input type="checkbox" checked><svg><use href="#blend"/></svg>FACE_BLEND (28)</label></li>
                    <li><label><input type="checkbox" checked><svg><use href="#extrude"/></svg>EXTRUDED (29)</label></li>
                    <li><label><input type="checkbox" checked><svg><use href="#tsheet"/></svg>TRIMMED_SHEET (30)</label></li>
                    <li><label><input type="checkbox" checked><svg><use href="#sew"/></svg>SEW (31)</label></li>
                    <li><label><input type="checkbox" checked><svg><use href="#hollow"/></svg>HOLLOW (32)</label></li>
                </ul>
            </div>
            <div class="hscroll">
                <button aria-label="Scroll left"><svg viewBox="0 0 18 18"><path d="M11 5L7 9l4 4"/></svg></button>
                <span class="thumb"></span>
                <button aria-label="Scroll right"><svg viewBox="0 0 18 18"><path d="M7 5l4 4-4 4"/></svg></button>
            </div>
            <div class="splitter"><span></span></div>
            <div class="drawers">
                <button>依附性</button>
                <button>细节</button>
            </div>
        </aside>

        <div class="resources">
            <div class="tabs">
                <button aria-label="Model navigator"><svg><use href="#treeview"/></svg></button>
            </div>
            <div class="tabs">
                <button aria-label="Web browser"><svg><use href="#webdoc"/></svg></button>
                <button aria-label="Training"><svg><use href="#hat"/></svg></button>
                <button aria-label="Help"><svg><use href="#help"/></svg></button>
            </div>
            <div class="tabs">
                <button aria-label="History"><svg><use href="#history"/></svg></button>
                <button aria-label="Palette"><svg><use href="#book"/></svg></button>
                <button aria-label="Spreadsheet"><svg><use href="#sheetlist"/></svg></button>
            </div>
        </div>
    </main>

    <!-- STATUS BAR -->
    <div class="status">
        <span class="cue"></span>
        <span class="message">Part file saved</span>
        <span class="cell"></span>
        <span class="cell small"></span>
    </div>

    <!-- TASKBAR -->
    <footer class="taskbar">
        <button class="start"><svg class="logo" aria-hidden="true"><use href="#flag"/></svg>开始</button>
        <div class="quick">
            <button aria-label="Messenger"><svg><use href="#man"/></svg></button>
            <button aria-label="Internet Explorer"><svg><use href="#ie"/></svg></button>
            <button aria-label="Outlook Express"><svg><use href="#mail"/></svg></button>
            <button aria-label="Tools"><svg><use href="#fork"/></svg></button>
            <button aria-label="Firefox"><svg><use href="#fox"/></svg></button>
        </div>
        <div class="tasks">
            <button><svg><use href="#dir"/></svg><span>F:\Downloads</span></button>
            <button><svg><use href="#fox"/></svg><span><span class="cjk">『</span>1278<span class="cjk">』按图</span>...</span></button>
            <button class="current"><svg><use href="#app"/></svg><span>Unigraphics N...</span></button>
            <button><svg><use href="#pic"/></svg><span>20090615_07a3...</span></button>
        </div>
        <button class="lang" aria-label="Keyboard"><svg><use href="#kbd"/></svg></button>
        <div class="tray">
            <svg><use href="#people"/></svg>
            <svg><use href="#qq"/></svg>
            <svg><use href="#qq2"/></svg>
            <svg><use href="#net"/></svg>
            <svg><use href="#sound"/></svg>
            <svg><use href="#umbrella"/></svg>
            <time>21:42</time>
        </div>
    </footer>
</body>
</html>
```

FILE: styles.css
```css
/* Global Styles */
* {
    margin: 0;
    padding: 0;
    box-sizing: border-box;
}

body {
    display: flex;
    flex-direction: column;
    height: 100vh;
    overflow: hidden;
    background-color: #ebe9ee;
    color: #000;
    font-family: "Liberation Mono", "Noto Sans CJK SC", monospace;
    font-size: 10px;
}

button {
    font: inherit;
    color: inherit;
    background: none;
    border: 0;
}

svg {
    width: 18px;
    height: 18px;
    flex: none;
    display: block;
}

.sheet {
    display: none;
}

/* Icon strokes and fills */
symbol {
    fill: none;
    stroke: #000;
    stroke-width: 1;
    shape-rendering: crispEdges;
}

.w2 { stroke-width: 2; }
.w3 { stroke-width: 3; }
.dash { stroke-dasharray: 2 1; }
.dots { stroke-dasharray: 1 1; }
.plain { stroke: none; }

.s-navy { stroke: #20208c; }
.s-blue { stroke: #1840c8; }
.s-sky { stroke: #58b8f4; }
.s-cyan { stroke: #30d8f0; }
.s-teal { stroke: #08777c; }
.s-green { stroke: #109430; }
.s-red { stroke: #e01c28; }
.s-dred { stroke: #a01020; }
.s-pink { stroke: #c86c80; }
.s-magenta { stroke: #e82090; }
.s-purple { stroke: #78207c; }
.s-brown { stroke: #744410; }
.s-orange { stroke: #e88820; }
.s-yellow { stroke: #fff060; }
.s-gray { stroke: #8a8890; }
.s-white { stroke: #fff; }

.f-white { fill: #fff; }
.f-black { fill: #101010; }
.f-gray { fill: #98969c; }
.f-cream { fill: #fffcc8; }
.f-yellow { fill: #f4ec70; }
.f-olive { fill: #8c8820; }
.f-orange { fill: #c4882c; }
.f-fox { fill: #d8560c; }
.f-brown { fill: #8c5030; }
.f-skin { fill: #fcd4b0; }
.f-pink { fill: #f0b8b8; }
.f-red { fill: #e02434; }
.f-cyan { fill: #18e4fc; }
.f-sky { fill: #90d8f8; }
.f-sage { fill: #80a098; }
.f-blue { fill: #0868d8; }
.f-navy { fill: #202878; }
.f-teal { fill: #087478; }
.f-green { fill: #108840; }
.f-lime { fill: #98e820; }
.f-flagred { fill: #f06030; }
.f-flaggreen { fill: #70c838; }
.f-flagblue { fill: #4488e8; }

/* Title bar */
.titlebar {
    display: flex;
    align-items: center;
    height: 26px;
    flex: none;
    padding: 0 2px;
    position: relative;
    background: linear-gradient(#1d52a0, #66a8ea 12%, #6db0ee 30%, #3c82d8 55%, #2a62bc 80%, #2350a0);
    color: #fff;
}

.titlebar h1 {
    flex: 1;
    margin-left: 2px;
    font-size: 13px;
    font-weight: bold;
    text-shadow: 1px 1px #183c80;
    white-space: pre;
}

.dock {
    position: absolute;
    top: 0;
    right: 49px;
    width: 230px;
    height: 3px;
    background-color: #4cc4f4;
    border-bottom: 1px solid #1c80c8;
    border-radius: 0 0 6px 6px;
}

.win {
    display: grid;
    place-items: center;
    width: 20px;
    height: 20px;
    margin-left: 4px;
    border: 1px solid #c8dcf8;
    border-radius: 3px;
    background: linear-gradient(#7cacec, #3c70cc);
}

.close {
    background: linear-gradient(#f09080, #d04424);
}

.win path {
    fill: none;
    stroke: #fff;
    stroke-width: 3;
}

.win .thin,
.mdi .thin {
    stroke-width: 1;
    shape-rendering: crispEdges;
}

/* Menu bar */
.menubar {
    display: flex;
    align-items: center;
    gap: 12px;
    height: 21px;
    flex: none;
    padding-left: 3px;
    font-size: 12px;
    border-bottom: 1px solid #d8d5dc;
}

.menubar > .icon {
    margin-right: -7px;
}

.menubar > button {
    display: flex;
    align-items: center;
    line-height: 18px;
    white-space: pre;
}

.menubar span {
    font-size: 10px;
}

.mdi {
    display: flex;
    margin-left: auto;
    color: #606064;
}

.mdi button {
    width: 18px;
    height: 18px;
}

.mdi path {
    fill: none;
    stroke: #5c5c60;
    stroke-width: 2;
}

/* Toolbars */
.toolrow {
    display: flex;
    height: 27px;
    flex: none;
    border-bottom: 1px solid #b4b1b8;
    box-shadow: inset 0 1px #fff;
}

.toolrow + .toolrow {
    height: 26px;
}

.toolbar {
    display: flex;
    align-items: center;
    margin-right: 2px;
    padding-right: 3px;
    border-right: 1px solid #9c999f;
}

.toolbar::before {
    content: "";
    width: 5px;
    height: 15px;
    background: radial-gradient(circle at 2px 2px, #b4b2ba 1px, transparent 1px) 0 0 / 5px 4px;
}

.toolbar button {
    display: grid;
    place-items: center;
    width: 24px;
    height: 22px;
}

.toolbar .hot {
    background-color: #f8f7fa;
    border: 1px solid #d4d2d8;
    border-radius: 3px;
}

.toolbar .on {
    background-color: #fff;
    border: 1px solid #8c8a90;
    border-radius: 3px;
}

.toolbar .drop {
    width: 13px;
}

.toolbar .wide {
    width: 16px;
}

.drop::after {
    content: "";
    border: 3px solid transparent;
    border-top-color: #000;
    border-bottom: 0;
}

.divider {
    width: 1px;
    height: 18px;
    margin: 0 5px 0 4px;
    background-color: #b8b5bc;
}

/* Work area */
main {
    display: flex;
    flex: 1;
    min-height: 0;
}

.snapbar {
    display: flex;
    flex-direction: column;
    align-items: center;
    align-self: flex-start;
    width: 24px;
    height: 170px;
    border-bottom: 1px solid #9c999f;
}

.snapbar::before {
    content: "";
    width: 14px;
    height: 4px;
    margin: 2px 0;
    background: radial-gradient(circle at 2px 2px, #aaa8b0 1px, transparent 1px) 0 0 / 4px 4px;
}

.snapbar button {
    height: 22px;
}

.viewport {
    position: relative;
    flex: 1;
    min-width: 0;
    border: solid #8c9aa0;
    border-width: 1px 1px 0 2px;
    background: linear-gradient(#25234f, #1f3d68 30%, #174f7c 60%, #106a96 96%);
}

.model {
    width: 100%;
    height: 100%;
}

.cursor path {
    fill: none;
    stroke: #cdbcc0;
    shape-rendering: crispEdges;
}

.cursor .over {
    stroke: #747a68;
}

.axis {
    font: 10px "Liberation Sans", sans-serif;
    fill: #d8e4e8;
}

.dim {
    fill: #607468;
}

.viewname {
    position: absolute;
    left: 4px;
    bottom: 0;
    font: 14px/16px Roboto, sans-serif;
    color: #c4d8e4;
}

/* Part navigator */
.navigator {
    display: flex;
    flex-direction: column;
    width: 203px;
    margin: 0 4px 0 3px;
    padding: 0 5px 3px 7px;
    border: solid #a09ea6;
    border-width: 0 1px;
}

.caption {
    display: flex;
    align-items: center;
    height: 20px;
    flex: none;
    padding-left: 4px;
}

.grip {
    flex: 1;
    height: 4px;
    background: radial-gradient(circle at 2px 2px, #aaa8b0 1px, transparent 1px) 0 0 / 4px 4px;
}

.pin {
    margin: 0 7px;
    border: 4px solid transparent;
    border-top: 0;
    border-bottom-color: #8c8a90;
}

.shut {
    width: 16px;
    font: bold 9px "DejaVu Sans", sans-serif;
}

.colhead {
    height: 16px;
    flex: none;
    padding-left: 5px;
    font-size: 12px;
    line-height: 16px;
    border-bottom: 1px solid #8c8a90;
}

.sort {
    margin-left: 8px;
    font-size: 10px;
    color: #8c8a90;
}

.tree {
    flex: 1;
    min-height: 0;
    overflow: hidden;
    background-color: #fff;
}

.root {
    display: flex;
    align-items: center;
    gap: 2px;
    height: 17px;
    padding-left: 5px;
    font-size: 12px;
}

.root .icon {
    margin-left: 1px;
}

.fold {
    width: 9px;
    height: 9px;
    border: 1px solid #8c8a90;
    font-size: 9px;
    line-height: 7px;
}

.tree ul {
    margin-left: 28px;
    list-style: none;
    background: repeating-linear-gradient(#b0aeb4 0 1px, transparent 1px 2px) 0 0 / 1px calc(100% - 7px) no-repeat;
}

.tree li {
    height: 16px;
}

.tree label {
    display: flex;
    align-items: center;
    height: 16px;
    white-space: pre;
}

.tree label::before {
    content: "";
    width: 9px;
    margin-right: 3px;
    border-top: 1px dotted #b0aeb4;
}

.tree label svg {
    width: 18px;
    height: 16px;
    margin: 0 1px 0 2px;
}

.tree input {
    appearance: none;
    display: grid;
    justify-items: center;
    width: 11px;
    height: 11px;
    flex: none;
    border: 1px solid #181818;
}

.tree input:checked::after {
    content: "";
    width: 5px;
    height: 8px;
    border: solid #20c830;
    border-width: 0 2px 2px 0;
    transform: rotate(40deg);
}

.hscroll {
    display: flex;
    height: 17px;
    flex: none;
    background-color: #eef2fa;
}

.hscroll button,
.thumb {
    display: grid;
    place-items: center;
    width: 17px;
    border: 1px solid #8098b8;
    border-radius: 2px;
    background: linear-gradient(#e4f0fc, #b4cce8);
}

.hscroll svg {
    width: 15px;
    height: 15px;
}

.hscroll path {
    fill: none;
    stroke: #30445c;
    stroke-width: 3;
}

.thumb {
    width: 72px;
    margin-right: auto;
}

.thumb::after {
    content: "";
    width: 8px;
    height: 7px;
    background: repeating-linear-gradient(90deg, #7890b0 0 1px, transparent 1px 2px);
}

.splitter {
    display: flex;
    align-items: center;
    gap: 2px;
    height: 8px;
    flex: none;
}

.splitter::before,
.splitter::after {
    content: "";
    flex: 1;
    height: 3px;
    border: solid #a09ea6;
    border-width: 1px 0;
}

.splitter span {
    width: 60px;
    height: 7px;
    background-color: #fff;
    border: 1px solid #a09ea6;
    border-radius: 2px;
}

.drawers {
    display: flex;
    flex-direction: column;
    gap: 4px;
    flex: none;
    padding: 4px 6px;
    background: linear-gradient(#6ca4e0, #5070b8);
}

.drawers button {
    height: 22px;
    padding-left: 7px;
    border-radius: 3px 3px 0 0;
    background: linear-gradient(90deg, #fff 45%, #c4d0ec);
    color: #1c50b8;
    font-size: 12px;
    font-weight: bold;
    line-height: 20px;
    text-align: left;
}

/* Resource bar */
.resources {
    display: flex;
    flex-direction: column;
    gap: 12px;
    width: 29px;
    padding: 14px 0 0 1px;
    background-color: #a5a3a9;
    border-left: 1px solid #8c8a90;
}

.tabs button {
    display: grid;
    place-items: center;
    width: 22px;
    height: 34px;
    background-color: #f2f1f4;
    border-bottom: 1px solid #d0ced4;
}

/* Status bar */
.status {
    display: flex;
    align-items: center;
    height: 22px;
    flex: none;
    background-color: #f0f1f5;
    border-top: 2px solid #c8c6cc;
    line-height: 16px;
}

.cue {
    flex: 552;
}

.message {
    flex: 367;
    padding-left: 4px;
    border-left: 1px solid #c4c8d0;
}

.cell {
    flex: 86;
    height: 14px;
    border-left: 1px solid #c4c8d0;
}

.small {
    flex: 19;
}

/* Taskbar */
.taskbar {
    display: flex;
    align-items: center;
    height: 30px;
    flex: none;
    background: linear-gradient(#2c64b8, #78b0f0 8%, #68a0e8 30%, #3468c4 55%, #2450ac);
    color: #fff;
}

.taskbar symbol,
#fox,
#flag,
#ie,
#people,
#qq,
#umbrella,
#sphere {
    shape-rendering: auto;
}

.start {
    display: flex;
    align-items: center;
    gap: 10px;
    width: 98px;
    height: 28px;
    padding-left: 10px;
    border-radius: 0 10px 10px 0;
    background: linear-gradient(#88cc80, #4cac48 25%, #259a24 48%, #118012 52%, #24b41c);
    box-shadow: inset -2px 0 2px #0c6810;
    font-size: 18px;
    font-style: italic;
    line-height: 26px;
}

.quick {
    display: flex;
    gap: 5px;
    width: 147px;
    padding-left: 9px;
}

.tasks {
    display: flex;
    flex: 1;
    gap: 2px;
    min-width: 0;
}

.tasks button {
    display: flex;
    align-items: center;
    gap: 3px;
    flex: 0 1 139px;
    height: 24px;
    padding-left: 8px;
    border: 1px solid #3c70c4;
    border-radius: 2px;
    background: linear-gradient(#6ca8ee, #4484dc 50%, #3068c4);
    white-space: nowrap;
}

.tasks .current {
    border-color: #183878;
    background: linear-gradient(#234c98, #1c408c);
}

.cjk {
    font-size: 12px;
}

.lang {
    width: 38px;
    padding-left: 10px;
}

.tray {
    display: flex;
    align-items: center;
    height: 30px;
    width: 167px;
    padding-left: 10px;
    background: linear-gradient(#5088d8, #c8dcfa 10%, #b0ccf4 45%, #7ca4e4);
    color: #101820;
}

.tray time {
    margin-left: 5px;
    font: 12px "Noto Sans", sans-serif;
}
```
